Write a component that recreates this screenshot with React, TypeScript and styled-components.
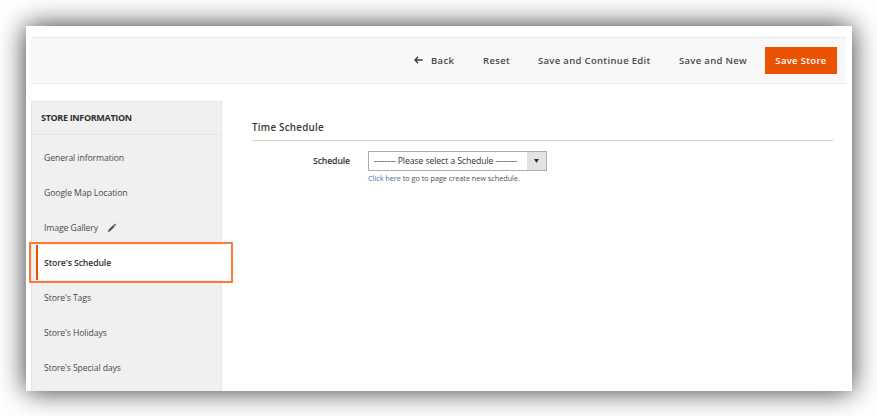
import React from "react";
import styled, { createGlobalStyle, css } from "styled-components";

const GlobalStyle = createGlobalStyle`
  *, *::before, *::after { box-sizing: border-box; }
  body {
    margin: 0;
    background: #fff;
    font-family: "Open Sans", sans-serif;
    color: #41362f;
    overflow: hidden;
  }
`;

const Stage = styled.div`
  height: 416px;
  padding: 26px 25px 25px 26px;
`;

const Page = styled.main`
  height: 365px;
  padding: 11px 6px 0 5px;
  display: flex;
  flex-direction: column;
  background: #fff;
  box-shadow: 0 0 26px rgba(0, 0, 0, 0.8);
`;

const Toolbar = styled.header`
  height: 47px;
  flex: none;
  display: flex;
  align-items: center;
  justify-content: flex-end;
  padding-right: 9px;
  background: #f8f8f8;
  border-top: 1px solid #ebebeb;
  border-bottom: 1px solid #ebebeb;
`;

const ToolbarButton = styled.button<{ $width: number }>`
  width: ${(p) => p.$width}px;
  height: 27px;
  padding: 0;
  border: 0;
  display: flex;
  align-items: center;
  background: none;
  color: #514943;
  font: 600 9.5px/27px "Open Sans", sans-serif;
  letter-spacing: 0.32px;
  white-space: nowrap;
`;

const PrimaryButton = styled(ToolbarButton)`
  justify-content: center;
  background: #eb5202;
  color: #fff;
`;

const BackIcon = styled.svg`
  width: 9px;
  height: 8px;
  margin: 0 8px 1px 0;
  flex: none;
`;

const Body = styled.div`
  flex: 1;
  min-height: 0;
  margin-top: 17px;
  display: flex;
  gap: 30px;
`;

const Sidebar = styled.nav`
  width: 191px;
  flex: none;
  background: #f0f0f0;
  border: 1px solid #e6e6e6;
  border-width: 1px 1px 0;
`;

const SidebarTitle = styled.h2`
  height: 33px;
  margin: 0 0 5px;
  padding-left: 9px;
  border-bottom: 1px solid #e6e6e6;
  color: #303030;
  font-size: 9px;
  font-weight: 700;
  line-height: 32px;
  letter-spacing: -0.33px;
  white-space: nowrap;
`;

const NavItem = styled.div<{ $active?: boolean }>`
  position: relative;
  height: 35px;
  margin-left: 4px;
  padding-left: 8px;
  display: flex;
  align-items: center;
  gap: 9px;
  font-size: 8.7px;
  letter-spacing: -0.11px;
  color: #4a4a4a;
  white-space: nowrap;
  ${(p) =>
    p.$active &&
    css`
      margin-right: -1px;
      padding-left: 6px;
      border-left: 2px solid #eb5202;
      background: #fff;
      color: #303030;
      font-weight: 600;
    `}
`;

const Highlight = styled.span`
  position: absolute;
  inset: -3px -11px -3px -9px;
  border: 2px solid #fb7b38;
  border-radius: 1px;
`;

const Content = styled.section`
  width: 581px;
`;

const SectionTitle = styled.h1`
  height: 40px;
  margin: 0;
  padding-top: 13px;
  border-bottom: 1px solid #d6cfc4;
  color: #41362f;
  font-size: 9.8px;
  font-weight: 600;
  line-height: 28px;
  letter-spacing: 0.26px;
`;

const Field = styled.div`
  display: flex;
  margin-top: 10px;
`;

const Label = styled.label`
  width: 98px;
  margin-right: 18px;
  text-align: right;
  font-size: 8.7px;
  font-weight: 600;
  line-height: 21px;
  letter-spacing: -0.12px;
  color: #303030;
`;

const Select = styled.div`
  width: 179px;
  height: 20px;
  display: flex;
  border: 1px solid #adadad;
  font-size: 8.7px;
  line-height: 18px;
  letter-spacing: -0.1px;
  color: #303030;
`;

const SelectValue = styled.span`
  flex: 1;
  padding-left: 5px;
  white-space: nowrap;
`;

const SelectArrow = styled.span`
  width: 19px;
  display: flex;
  align-items: center;
  justify-content: center;
  background: #e3e3e3;
`;

const Note = styled.p`
  margin: 1px 0 0;
  font-size: 7.3px;
  line-height: 12px;
  letter-spacing: -0.03px;
  color: #55504c;
  white-space: nowrap;
`;

const NoteLink = styled.span`
  color: #3f6fa8;
`;

const items: { label: string; edited?: boolean; active?: boolean }[] = [
  { label: "General information" },
  { label: "Google Map Location" },
  { label: "Image Gallery", edited: true },
  { label: "Store's Schedule", active: true },
  { label: "Store's Tags" },
  { label: "Store's Holidays" },
  { label: "Store's Special days" },
];

const Pencil = () => (
  <svg width="10" height="10" viewBox="0 0 10 10">
    <path d="M.8 8.9l.7-2.2 4.8-4.8 1.5 1.5-4.8 4.8zM6.8 1.4l.9-.8 1.4 1.4-.9.9z" fill="#51504e" />
  </svg>
);

export default function App() {
  return (
    <>
      <GlobalStyle />
      <Stage>
        <Page>
          <Toolbar>
            <ToolbarButton $width={69}>
              <BackIcon viewBox="0 0 9 8">
                <path d="M4 .8L1 4l3 3.2M1 4h7.6" fill="none" stroke="#41362f" strokeWidth="1.3" />
              </BackIcon>
              Back
            </ToolbarButton>
            <ToolbarButton $width={55}>Reset</ToolbarButton>
            <ToolbarButton $width={141}>Save and Continue Edit</ToolbarButton>
            <ToolbarButton $width={86}>Save and New</ToolbarButton>
            <PrimaryButton $width={72}>Save Store</PrimaryButton>
          </Toolbar>
          <Body>
            <Sidebar>
              <SidebarTitle>STORE INFORMATION</SidebarTitle>
              {items.map((item) => (
                <NavItem key={item.label} $active={item.active}>
                  {item.label}
                  {item.edited && <Pencil />}
                  {item.active && <Highlight />}
                </NavItem>
              ))}
            </Sidebar>
            <Content>
              <SectionTitle>Time Schedule</SectionTitle>
              <Field>
                <Label>Schedule</Label>
                <div>
                  <Select>
                    <SelectValue>-------- Please select a Schedule --------</SelectValue>
                    <SelectArrow>
                      <svg width="5" height="4" viewBox="0 0 5 4">
                        <path d="M0 0h5L2.5 4z" fill="#303030" />
                      </svg>
                    </SelectArrow>
                  </Select>
                  <Note>
                    <NoteLink>Click here</NoteLink> to go to page create new schedule.
                  </Note>
                </div>
              </Field>
            </Content>
          </Body>
        </Page>
      </Stage>
    </>
  );
}
